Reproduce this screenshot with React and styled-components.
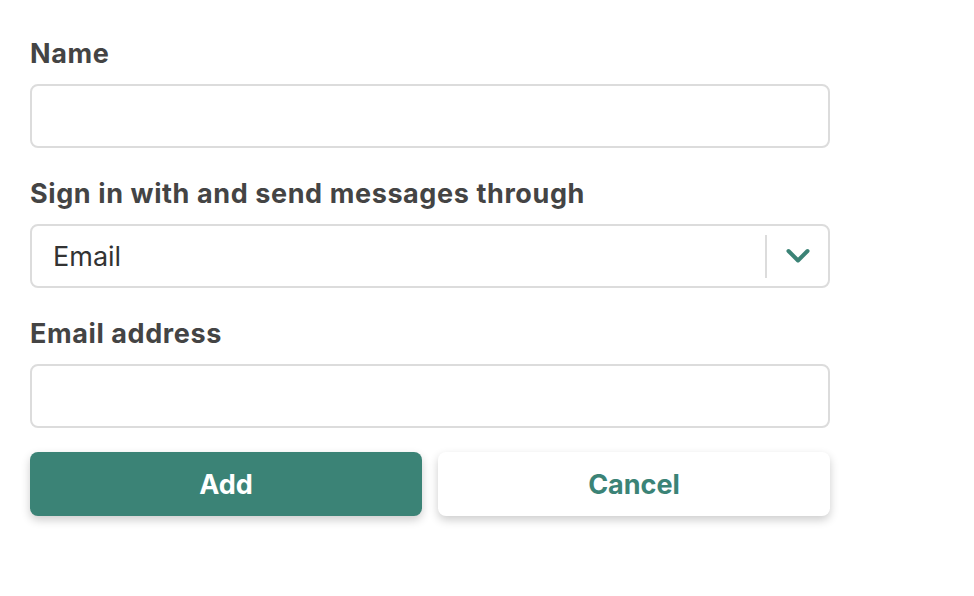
import React from "react";
import styled, { createGlobalStyle } from "styled-components";

const Global = createGlobalStyle`
  html, body { margin: 0; padding: 0; background: #fff; }
  body { font-family: Inter, "Noto Sans", sans-serif; }
`;

const Form = styled.form`
  width: 800px;
  padding: 39px 30px 40px;
  display: flex;
  flex-direction: column;
`;

const Field = styled.div`
  display: flex;
  flex-direction: column;
  gap: 15px;
  margin-bottom: ${(p) => p.$mb}px;
`;

const Label = styled.label`
  font-size: 27px;
  line-height: 30px;
  font-weight: 700;
  letter-spacing: 0.6px;
  color: #444;
`;

const Input = styled.input`
  box-sizing: border-box;
  height: 64px;
  width: 100%;
  border: 2px solid #dcdcdc;
  border-radius: 8px;
  padding: 0 21px;
  font: inherit;
  font-size: 27px;
  color: #333;
  outline: none;
  background: #fff;
`;

const SelectBox = styled.div`
  box-sizing: border-box;
  height: 64px;
  border: 2px solid #dcdcdc;
  border-radius: 8px;
  display: flex;
  align-items: center;
  padding-left: 21px;
  font-size: 27px;
  color: #333;
`;

const SelectValue = styled.span`
  flex: 1;
`;

const Divider = styled.span`
  width: 2px;
  height: 43px;
  background: #dcdcdc;
`;

const Caret = styled.span`
  width: 61px;
  display: flex;
  justify-content: center;
  align-items: center;
`;

const Buttons = styled.div`
  display: grid;
  grid-template-columns: 1fr 1fr;
  gap: 16px;
`;

const Button = styled.button`
  height: 64px;
  border: none;
  border-radius: 8px;
  font: inherit;
  font-size: 27px;
  font-weight: 700;
  cursor: pointer;
  background: ${(p) => (p.$primary ? "#3b8376" : "#fff")};
  color: ${(p) => (p.$primary ? "#fff" : "#3b8376")};
  box-shadow: 0 4px 10px rgba(0, 0, 0, 0.2);
`;

export default function App() {
  return (
    <>
      <Global />
      <Form onSubmit={(e) => e.preventDefault()}>
        <Field $mb={31}>
          <Label>Name</Label>
          <Input />
        </Field>
        <Field $mb={31}>
          <Label>Sign in with and send messages through</Label>
          <SelectBox>
            <SelectValue>Email</SelectValue>
            <Divider />
            <Caret>
              <svg width="24" height="16" viewBox="0 0 24 16">
                <path
                  d="M2.5 3 L12 12.5 L21.5 3"
                  fill="none"
                  stroke="#3b8376"
                  strokeWidth="4"
                  strokeLinecap="round"
                  strokeLinejoin="round"
                />
              </svg>
            </Caret>
          </SelectBox>
        </Field>
        <Field $mb={24}>
          <Label>Email address</Label>
          <Input />
        </Field>
        <Buttons>
          <Button type="submit" $primary>Add</Button>
          <Button type="button">Cancel</Button>
        </Buttons>
      </Form>
    </>
  );
}
